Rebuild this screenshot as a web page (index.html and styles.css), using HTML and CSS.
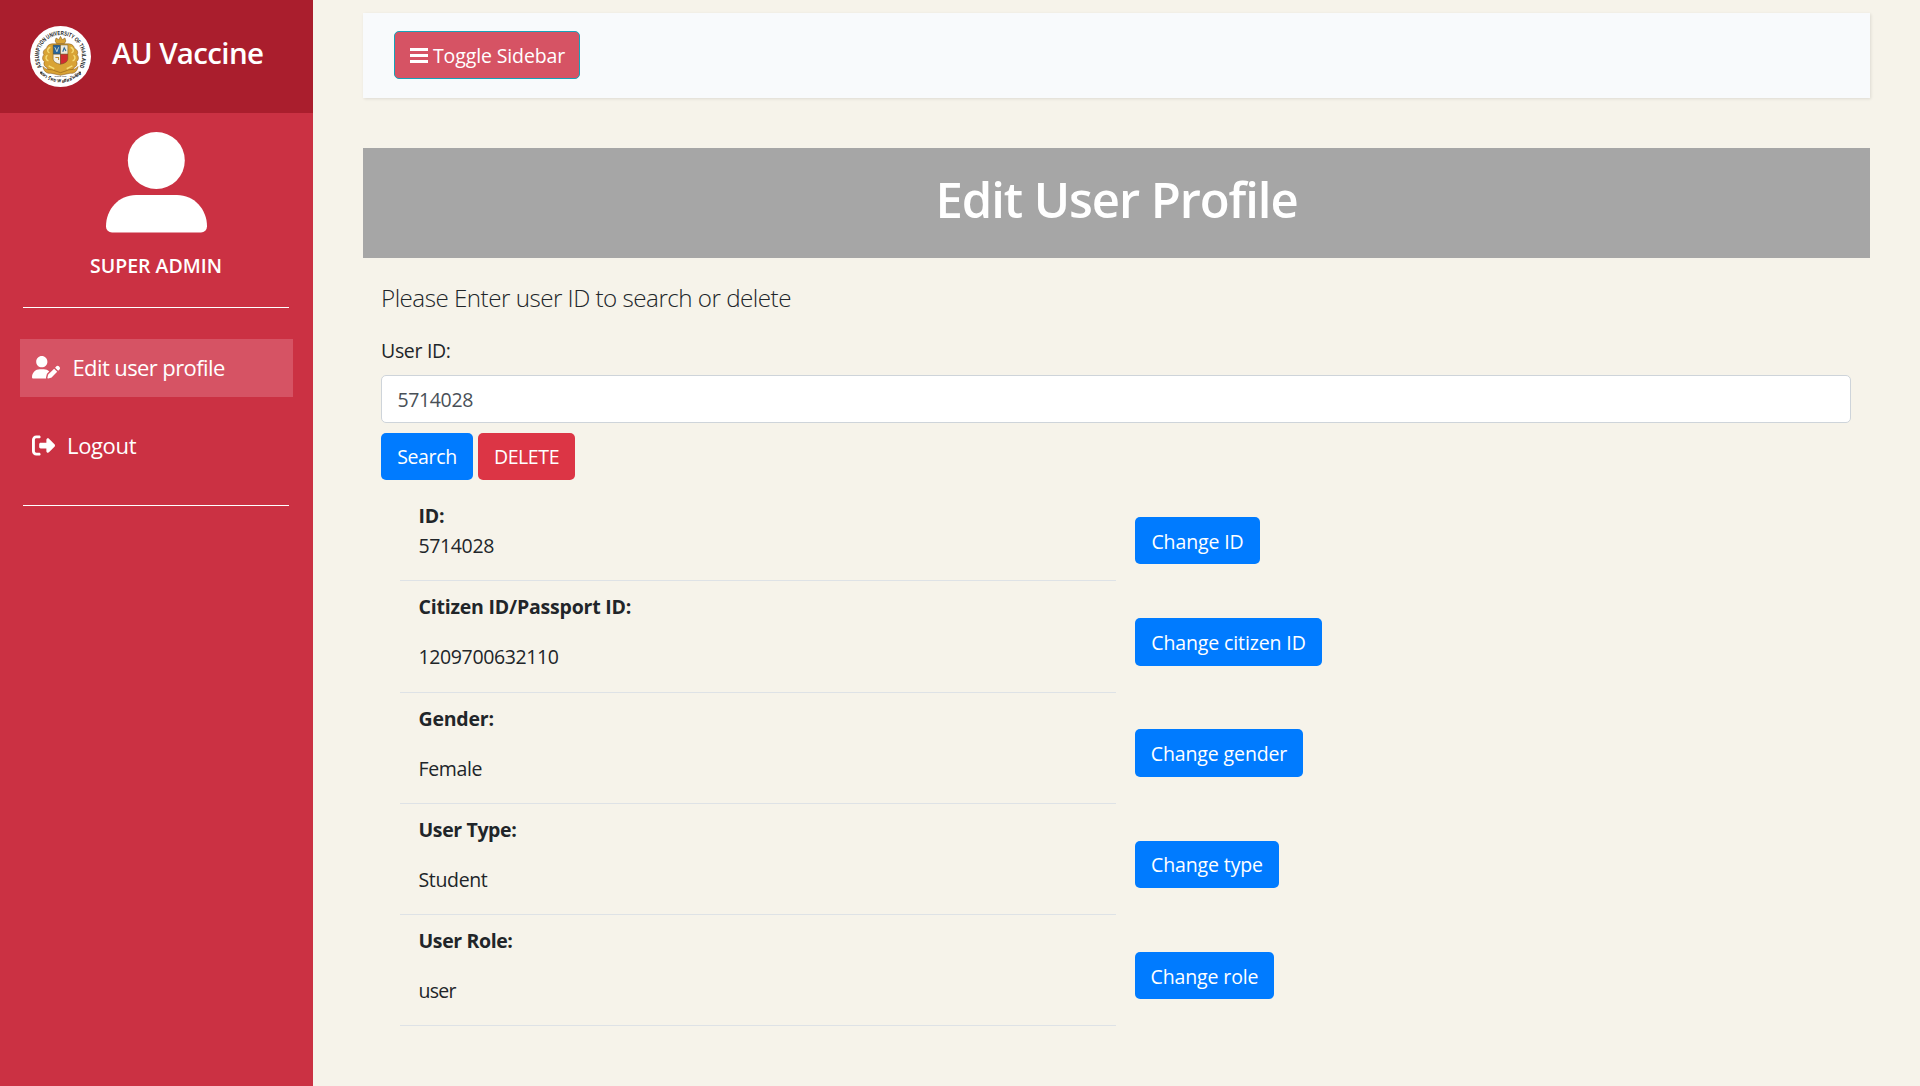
FILE: index.html
```
<!DOCTYPE html>
<html lang="en">
<head>
<meta charset="utf-8">
<title>AU Vaccine - Edit User Profile</title>
<link rel="stylesheet" href="styles.css">
</head>
<body>
<div class="wrapper">
  <nav class="sidebar">
    <div class="sidebar-header">
      <svg class="logo" viewBox="0 0 61 61">
        <defs>
          <path id="ringTop" d="M15.300 45.700A21.500 21.500 0 1 1 45.700 45.700"/>
          <path id="ringBottom" d="M11 47.700A26 26 0 0 0 50 47.700"/>
        </defs>
        <circle cx="30.5" cy="30.5" r="30.5" fill="#fff"/>
        <text class="seal-text"><textPath href="#ringTop" startOffset="50%" text-anchor="middle" textLength="89" lengthAdjust="spacingAndGlyphs">ASSUMPTION UNIVERSITY OF THAILAND</textPath></text>
        <text class="seal-motto"><textPath href="#ringBottom" startOffset="50%" text-anchor="middle">มหาวิทยาลัยอัสสัมชัญ</textPath></text>
        <circle cx="11" cy="46.5" r=".9" fill="#222"/>
        <circle cx="50" cy="46.5" r=".9" fill="#222"/>
        <g transform="translate(30.500 29.500) scale(1.130) translate(-30.500 -28.800)">
          <g fill="#d9a335" stroke="#8a5a17" stroke-width=".5">
            <path d="M25.8 16l.8-2.7 2.3 1.5 1.6-2.9 1.6 2.9 2.3-1.5.8 2.7-1.2 2.2h-7z"/>
            <path d="M23 18.500c-3 .2-4.500 2-4.800 4-2.800 1.200-3.600 3.500-2.400 5.600-1.700 2-1.500 4.600.4 6.100-1 2.300.1 4.600 2.300 5.200l2.300 3.800 5.200.2 4.500 2.400 4.500-2.400 5.200-.2 2.300-3.800c2.200-.6 3.300-2.900 2.300-5.200 1.900-1.500 2.100-4.100.4-6.100 1.200-2.100.4-4.400-2.400-5.600-.3-2-1.800-3.800-4.800-4z"/>
            <path d="M15 38.500c3 4 7 2 9.500 3.500l6 2 6-2c2.500-1.500 6.500.5 9.500-3.500-.5 4-3 6.500-7 6l-8.500 1.800-8.500-1.800c-4 .5-6.500-2-7-6z"/>
          </g>
          <g fill="none" stroke="#f5dc76" stroke-width="1.300">
            <path d="M21.500 21.500c-3 1-3 4-.8 5M19 28.500c-2.200 1.500-1.500 4.500.8 5M39.500 21.500c3 1 3 4 .8 5M42 28.500c2.200 1.500 1.500 4.500-.8 5M20 38l5 2.500M41 38l-5 2.500"/>
          </g>
          <g stroke="#5d4a22" stroke-width=".4">
            <path fill="#27649c" d="M24 19.500h6.500v8.200H24z"/>
            <path fill="#eee9dc" d="M30.500 19.500H37v8.200h-6.500z"/>
            <path fill="#f4efe4" d="M24 27.700h6.500v8.800c-4-.6-6.500-2.300-6.500-5z"/>
            <path fill="#d02c30" d="M30.500 27.700H37v3.800c0 2.700-2.500 4.400-6.500 5z"/>
          </g>
          <path d="M25.500 21.500l1.800 4 1.500-4" fill="none" stroke="#d8dfd2" stroke-width=".8"/>
          <path d="M32.500 25.500l1.300-3.500 1.500 2.800" fill="none" stroke="#2b6a9d" stroke-width="1"/>
          <path d="M26 30.500h2.800v2.300" fill="none" stroke="#bd8b2b" stroke-width=".9"/>
        </g>
        <text class="seal-since" x="30.500" y="50.500" text-anchor="middle">SINCE 1969</text>
      </svg>
      <span class="brand">AU Vaccine</span>
    </div>
    <div class="profile">
      <svg class="avatar" viewBox="0 0 101 101" fill="#fff">
        <circle cx="50.300" cy="28.500" r="28.500"/>
        <path d="M30 63H71C88 63 101 77 101 94.500a6 6 0 0 1-6 6H6a6 6 0 0 1-6-6C0 77 13 63 30 63z"/>
      </svg>
      <span class="profile-name">SUPER ADMIN</span>
    </div>
    <ul class="menu">
      <li><a class="menu-link active" href="#">
        <svg class="icon-user" viewBox="0 0 640 512" fill="currentColor"><path d="M224 256c70.700 0 128-57.300 128-128S294.700 0 224 0 96 57.300 96 128s57.300 128 128 128zm-45.700 48C79.800 304 0 383.800 0 482.300 0 498.700 13.300 512 29.700 512h293.100c-3.100-8.800-3.700-18.400-1.400-27.800l15-60.100c2.800-11.300 8.600-21.500 16.800-29.700l40.300-40.300c-32.100-31-75.700-50.100-123.900-50.100h-91.300zm435.500-68.300c-15.600-15.600-40.900-15.600-56.600 0l-29.400 29.400 71 71 29.400-29.400c15.600-15.600 15.600-40.900 0-56.600l-14.400-14.400zM375.900 417c-4.100 4.100-7 9.200-8.400 14.900l-15 60.100c-1.400 5.500.2 11.200 4.200 15.200s9.700 5.600 15.200 4.200l60.100-15c5.600-1.400 10.800-4.300 14.900-8.400L576.100 358.700l-71-71L375.900 417z"/></svg>
        <span class="label-edit">Edit user profile</span></a></li>
      <li><a class="menu-link" href="#">
        <svg class="icon-logout" viewBox="0 0 512 512" fill="currentColor"><path d="M377.900 105.900L500.700 228.700c7.200 7.200 11.300 17.100 11.300 27.300s-4.100 20.100-11.300 27.300L377.900 406.100c-6.400 6.400-15 9.900-24 9.900-18.700 0-33.900-15.200-33.900-33.900V320H192c-17.700 0-32-14.300-32-32v-64c0-17.700 14.300-32 32-32h128v-62.100c0-18.700 15.200-33.900 33.900-33.900 9 0 17.600 3.600 24 9.900zM160 96H96c-17.700 0-32 14.300-32 32v256c0 17.700 14.300 32 32 32h64c17.700 0 32 14.300 32 32s-14.300 32-32 32H96c-53 0-96-43-96-96V128c0-53 43-96 96-96h64c17.700 0 32 14.300 32 32s-14.300 32-32 32z"/></svg>
        <span class="label-logout">Logout</span></a></li>
    </ul>
  </nav>
  <main class="content">
    <div class="navbar">
      <button class="btn btn-toggle" type="button">
        <svg class="icon-bars" viewBox="0 0 18 15" fill="currentColor"><path d="M0 0h18v3H0zM0 6h18v3H0zM0 12h18v3H0z"/></svg>
        <span>Toggle Sidebar</span>
      </button>
    </div>
    <h1 class="banner">Edit User Profile</h1>
    <form class="search">
      <p class="lead">Please Enter user ID to search or delete</p>
      <label class="field-label" for="uid">User ID:</label>
      <input class="field" id="uid" type="text" value="5714028">
      <div class="actions">
        <button class="btn btn-primary btn-search" type="button">Search</button>
        <button class="btn btn-danger" type="button">DELETE</button>
      </div>
    </form>
    <div class="details">
      <div class="row compact">
        <dl class="info"><dt>ID:</dt><dd class="digits">5714028</dd></dl>
        <div class="cell"><button class="btn btn-primary w-id" type="button">Change ID</button></div>
      </div>
      <div class="row tall">
        <dl class="info"><dt>Citizen ID/Passport ID:</dt><dd class="digits">1209700632110</dd></dl>
        <div class="cell"><button class="btn btn-primary w-citizen" type="button">Change citizen ID</button></div>
      </div>
      <div class="row">
        <dl class="info"><dt>Gender:</dt><dd>Female</dd></dl>
        <div class="cell cell-gender"><button class="btn btn-primary w-gender" type="button">Change gender</button></div>
      </div>
      <div class="row">
        <dl class="info"><dt class="tight">User Type:</dt><dd>Student</dd></dl>
        <div class="cell"><button class="btn btn-primary w-type" type="button">Change type</button></div>
      </div>
      <div class="row">
        <dl class="info"><dt class="tight">User Role:</dt><dd class="tight">user</dd></dl>
        <div class="cell"><button class="btn btn-primary w-role" type="button">Change role</button></div>
      </div>
    </div>
  </main>
</div>
</body>
</html>
```
FILE: styles.css
```
* { box-sizing: border-box; }

body {
  margin: 0;
  background: #f6f3ea;
  color: #212529;
  font: 400 19.5px/30px "Open Sans", "Noto Sans", sans-serif;
}

svg { display: block; flex: none; }

.wrapper { display: flex; height: 1086px; overflow: hidden; }

/* Sidebar */
.sidebar { width: 313px; flex: none; background: #cb3143; color: #fff; }

.sidebar-header {
  display: flex;
  align-items: flex-start;
  height: 113px;
  padding: 26px 0 0 30px;
  background: #aa1e2d;
}
.logo { width: 61px; height: 61px; }
.brand {
  margin: 6px 0 0 21px;
  font-size: 29.5px;
  line-height: 42px;
  font-weight: 600;
  letter-spacing: -.65px;
  white-space: nowrap;
}
.seal-text { font: 700 6px "Liberation Sans", sans-serif; fill: #222; }
.seal-motto { font: 700 4.500px "Noto Sans", sans-serif; fill: #222; }
.seal-since { font: 700 2.200px "Liberation Sans", sans-serif; fill: #555; }

.profile {
  display: flex;
  flex-direction: column;
  align-items: center;
  height: 195px;
  margin: 0 24px 0 23px;
  padding-top: 19px;
  border-bottom: 1px solid #fff;
}
.avatar { width: 101px; height: 101px; }
.profile-name { margin-top: 18px; font-weight: 600; }

.menu {
  list-style: none;
  height: 198px;
  margin: 0 24px 0 23px;
  padding: 31px 0 0;
  border-bottom: 1px solid #fff;
}
.menu li { height: 78px; margin: 0 -4px 0 -3px; }
.menu-link {
  display: flex;
  align-items: center;
  height: 58px;
  padding: 0 0 2px 12px;
  color: #fff;
  font-size: 22px;
  text-decoration: none;
}
.menu-link.active { background: #d65364; }
.icon-user { width: 28px; height: 22.500px; margin-top: 1px; }
.icon-logout { width: 23px; height: 23px; }
.label-edit { margin-left: 12.500px; letter-spacing: -.6px; }
.label-logout { margin-left: 12px; letter-spacing: -.35px; }

/* Main column */
.content { flex: 1; padding: 13px 50px 0; }

.navbar {
  display: flex;
  align-items: flex-start;
  height: 85px;
  padding: 18px 31px;
  background: #f8fafc;
  box-shadow: 1px 1px 3px rgba(0, 0, 0, .1);
}

.btn {
  display: block;
  height: 47px;
  margin: 0;
  padding: 1px 0 0;
  border: 1px solid transparent;
  border-radius: 5px;
  color: #fff;
  font: inherit;
  letter-spacing: -.12px;
  text-align: center;
  white-space: nowrap;
}
.btn-toggle {
  display: flex;
  align-items: center;
  gap: 5px;
  width: 186px;
  height: 48px;
  padding: 1px 0 0 15px;
  background: #d65364;
  border-color: #17a2b8;
  letter-spacing: -.12px;
}
.icon-bars { width: 18px; height: 15px; }
.btn-primary { background: #007bff; }
.btn-danger { width: 97px; background: #dc3545; letter-spacing: -.4px; }
.btn-search { width: 92px; letter-spacing: -.35px; }

.banner {
  height: 110px;
  margin: 50px 0 0;
  padding-top: 21px;
  background: #a6a6a6;
  color: #fff;
  font-size: 49px;
  line-height: 60px;
  font-weight: 600;
  letter-spacing: -1.080px;
  text-align: center;
}

.search { padding: 21px 19px 0 18px; }
.lead {
  margin: 0;
  font-size: 24.2px;
  line-height: 38px;
  font-weight: 300;
  letter-spacing: -.51px;
}
.field-label { display: block; margin-top: 19px; letter-spacing: -.32px; }
.field {
  display: block;
  width: 100%;
  height: 48px;
  margin-top: 9px;
  padding: 0 15px 0 15.500px;
  border: 1px solid #ced4da;
  border-radius: 5px;
  background: #fff;
  color: #495057;
  font: inherit;
  letter-spacing: -.37px;
}
.actions { display: flex; gap: 5px; padding-top: 10px; }

/* User details */
.details { padding: 9px 0 0 37px; }
.row { display: flex; height: 111px; }
.row.tall { height: 112px; }
.row.compact { height: 92px; }
.info {
  display: flex;
  flex-direction: column;
  gap: 20px;
  width: 716px;
  margin: 0;
  padding: 11px 19px 0 18.500px;
  border-bottom: 1px solid #dee2e6;
}
.compact .info { gap: 0; padding-top: 12px; }
.info dt { font-weight: 700; letter-spacing: -.2px; }
.info dd { margin: 0; letter-spacing: -.35px; }
.info dd.digits { letter-spacing: -.37px; }
.info dt.tight { letter-spacing: -.38px; }
.info dd.tight { letter-spacing: -.7px; }
.cell { padding: 37px 0 0 19px; }
.cell-gender { padding-top: 36px; }
.compact .cell { padding-top: 28px; }
.w-id { width: 125px; padding-top: 2px; }
.w-citizen { width: 187px; height: 48px; }
.w-gender { width: 168px; height: 48px; padding-top: 2px; }
.w-type { width: 144px; }
.w-role { width: 139px; padding-top: 2px; }
```
